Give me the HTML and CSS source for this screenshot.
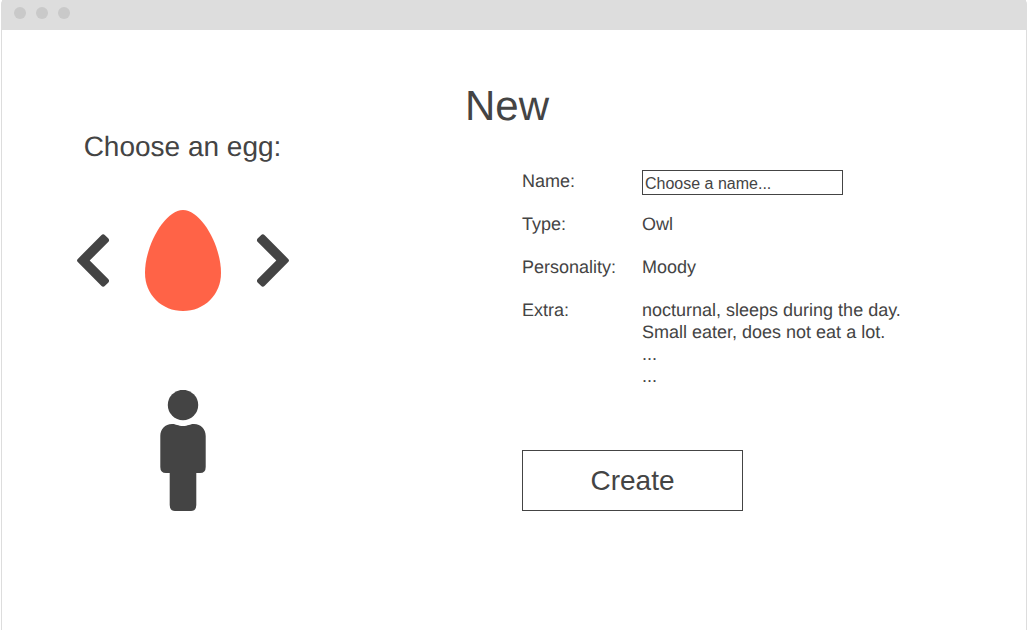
FILE: index.html
```html
<!DOCTYPE html>
<html lang="en">
<head>
<meta charset="utf-8">
<title>New</title>
<link rel="stylesheet" href="styles.css">
</head>
<body>
<div class="window">
  <header class="titlebar">
    <span class="dot"></span><span class="dot"></span><span class="dot"></span>
  </header>
  <main class="content">
    <h1 class="title">New</h1>
    <div class="columns">
      <section class="picker">
        <h2 class="subtitle">Choose an egg:</h2>
        <div class="carousel">
          <button class="arrow" type="button" aria-label="Previous egg">
            <svg width="32" height="53" viewBox="0 0 32 53"><path d="M.8 24.900 24.300 1.200Q26.200-.6 28 1.200L31.200 4.300Q33 6.200 31.200 8.100L12.700 26.500 31.200 44.900Q33 46.800 31.200 48.700L28 51.800Q26.200 53.600 24.300 51.800L.8 28.100Q-.8 26.500 .8 24.900Z"/></svg>
          </button>
          <svg class="egg" width="76" height="101" viewBox="0 0 76 101"><path d="M38 0C56 0 76 35 76 63C76 85 59 101 38 101S0 85 0 63C0 35 20 0 38 0Z"/></svg>
          <button class="arrow" type="button" aria-label="Next egg">
            <svg width="32" height="53" viewBox="0 0 32 53"><path d="M31.200 24.900 7.700 1.200Q5.800-.6 4 1.200L.8 4.300Q-1 6.200 .8 8.100L19.300 26.500 .8 44.900Q-1 46.800 .8 48.700L4 51.800Q5.800 53.600 7.700 51.800L31.200 28.100Q32.800 26.500 31.200 24.900Z"/></svg>
          </button>
        </div>
        <svg class="person" width="46" height="121" viewBox="0 0 46 121"><circle cx="23" cy="15" r="15.200"/><path d="M12 34C16 34 18 36 23 36S30 34 34 34C41 34 45.700 39 45.700 46V77Q45.700 83 40 83H36.300V115Q36.300 121 31 121H15Q9.700 121 9.700 115V83H6Q.3 83 .3 77V46C.3 39 5 34 12 34Z"/></svg>
      </section>
      <form class="details">
        <div class="row">
          <label for="name">Name:</label>
          <input class="name" id="name" type="text" value="Choose a name...">
        </div>
        <div class="row"><span>Type:</span><span>Owl</span></div>
        <div class="row"><span>Personality:</span><span>Moody</span></div>
        <div class="row"><span>Extra:</span><span>nocturnal, sleeps during the day.<br>Small eater, does not eat a lot.<br>...<br>...</span></div>
        <button class="create" type="button">Create</button>
      </form>
    </div>
  </main>
</div>
</body>
</html>
```
FILE: styles.css
```css
* { box-sizing: border-box; }

body {
  margin: 0;
  background: #fff;
  color: #444;
  font-family: "Liberation Sans", Arial, sans-serif;
  font-size: 18px;
  line-height: 22px;
  text-rendering: geometricPrecision;
}

.window {
  min-height: 100vh;
  margin-left: 1px;
  border: 1px solid #ddd;
  border-width: 0 1px;
  border-radius: 4px 4px 0 0;
}

.titlebar {
  display: flex;
  gap: 10px;
  height: 30px;
  padding: 7px 12px;
  background: #ddd;
}

.dot {
  width: 12px;
  height: 12px;
  border-radius: 50%;
  background: #c9c9c9;
}

.content { padding-top: 52px; }

.title {
  margin: 0;
  padding-right: 14px;
  font-size: 42px;
  font-weight: normal;
  line-height: 48px;
  text-align: center;
}

.columns {
  display: grid;
  grid-template-columns: 361px 1fr;
  column-gap: 159px;
}

.picker {
  display: flex;
  flex-direction: column;
  align-items: center;
}

.subtitle {
  margin: 0;
  font-size: 28px;
  font-weight: normal;
  line-height: 34px;
}

.carousel {
  display: flex;
  align-items: center;
  gap: 36px;
  margin-top: 46px;
}

.arrow {
  display: flex;
  padding: 0;
  border: 0;
  background: none;
  fill: #444;
}

.arrow svg { overflow: visible; }

.egg { fill: #ff6347; }

.person {
  margin-top: 79px;
  fill: #444;
}

.details {
  display: flex;
  flex-direction: column;
  gap: 18px;
  padding-top: 40px;
}

.row {
  display: grid;
  grid-template-columns: 120px 1fr;
  min-height: 25px;
}

.name {
  width: 201px;
  height: 25px;
  padding: 3px 2px 1px;
  border: 1px solid #444;
  border-radius: 0;
  background: #fff;
  color: #444;
  font: 16px "Liberation Sans", Arial, sans-serif;
}

.create {
  width: 221px;
  height: 61px;
  margin-top: 45px;
  border: 1px solid #444;
  background: #fff;
  color: #444;
  font: 28px "Liberation Sans", Arial, sans-serif;
}
```
